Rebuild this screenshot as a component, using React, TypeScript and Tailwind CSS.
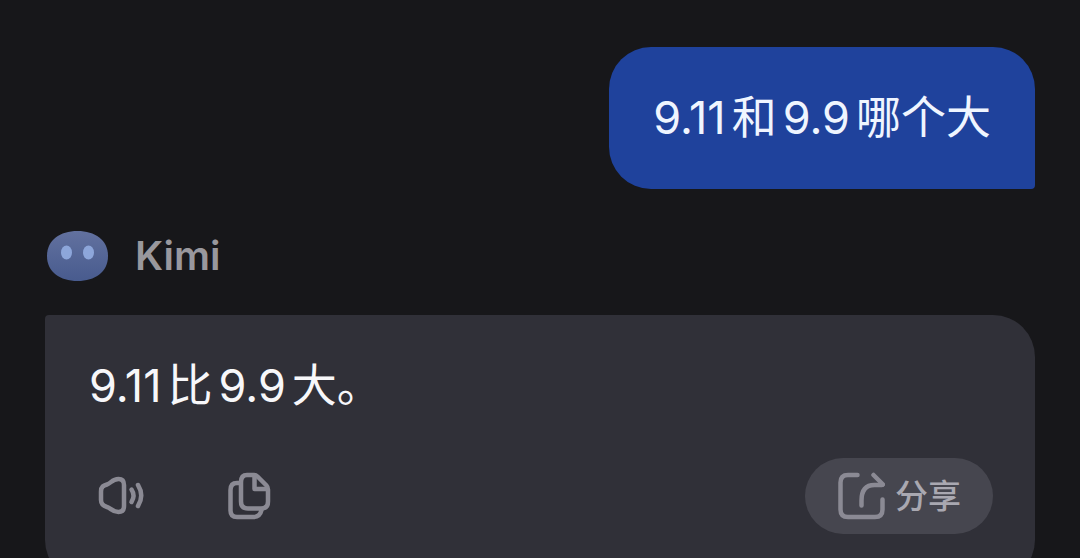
import React from 'react';

interface Message {
  id: number;
  role: 'user' | 'assistant';
  content: string;
}

const messages: Message[] = [
  { id: 1, role: 'user', content: '9.11和9.9哪个大' },
  { id: 2, role: 'assistant', content: '9.11比9.9大。' },
];

// Adds a little air between numbers and the Chinese characters next to them
const SpacedText: React.FC<{ text: string }> = ({ text }) => (
  <>
    {text.split(/([\d.]+)/).filter(Boolean).map((part, i) => (
      <span key={i} className={/^\d/.test(part) ? 'mx-1.5 first:ml-0' : ''}>
        {part}
      </span>
    ))}
  </>
);

const KimiAvatar = () => (
  <svg viewBox="0 0 62 50" className="w-[62px] h-[50px] shrink-0" aria-hidden="true">
    <defs>
      <linearGradient id="kimi-face" x1="0" y1="0" x2="0" y2="1">
        <stop offset="0" stopColor="#62719f" />
        <stop offset="1" stopColor="#485b8e" />
      </linearGradient>
    </defs>
    <path d="M30.500 0C48 0 61 9 61 25S48 50 30.500 50 0 41 0 25 13 0 30.500 0Z" fill="url(#kimi-face)" />
    <ellipse cx="19.500" cy="21.500" rx="5.500" ry="7" fill="#8da6da" />
    <ellipse cx="41.500" cy="21.500" rx="5.500" ry="7" fill="#8da6da" />
  </svg>
);

const SpeakerIcon = () => (
  <svg viewBox="0 0 48 48" className="size-12" fill="none" stroke="currentColor" strokeWidth="4.500" strokeLinecap="round" strokeLinejoin="round" aria-hidden="true">
    <path d="M4 19.500C4 14.500 6.500 13.500 10 12.500C14 11.500 15 7 21.500 7Q27 7 27 13V34Q27 40 21.500 40C15 40 14 36 10 35C6.500 34 4 32.500 4 28Z" />
    <path d="M34.500 17.500Q38.500 23.500 34.500 30" />
    <path d="M41 13Q47.500 23.500 41 34" />
  </svg>
);

const CopyIcon = () => (
  <svg viewBox="0 0 48 48" className="size-12" fill="none" stroke="currentColor" strokeWidth="4.500" strokeLinecap="round" strokeLinejoin="round" aria-hidden="true">
    <path d="M22 3H29Q31 3 32.500 4.500L41.500 13.500Q43 15 43 17.500V29.500Q43 36.500 36 36.500H23Q16 36.500 16 29.500V10Q16 3 22 3Z" />
    <path d="M29.500 4V17H41.500" />
    <path d="M14 11H12Q5.500 11 5.500 18V38.500Q5.500 45 12 45H28Q35 45 36.500 38" />
  </svg>
);

const ShareIcon = () => (
  <svg viewBox="0 0 48 48" className="size-12" fill="none" stroke="currentColor" strokeWidth="4.500" strokeLinecap="round" strokeLinejoin="round" aria-hidden="true">
    <path d="M20.500 3H11Q3.500 3 3.500 10.500V37.500Q3.500 45 11 45H38Q45.500 45 45.500 37.500V27.500" />
    <path d="M24.500 33.500V28.500Q24.500 13 37.500 13H45" />
    <path d="M36.500 3L46 12.500" />
  </svg>
);

const UserMessage: React.FC<{ content: string }> = ({ content }) => (
  <div className="flex justify-end">
    <p className="bg-[#1f429c] text-[#eff5ff] text-[45px] leading-[54px] font-normal px-11 py-11 rounded-[42px] rounded-br-sm">
      <SpacedText text={content} />
    </p>
  </div>
);

const AssistantMessage: React.FC<{ content: string }> = ({ content }) => (
  <div className="mt-[42px]">
    <div className="flex items-center gap-[26px] px-0.5 h-[50px]">
      <KimiAvatar />
      <h2 className="text-[#99989d] text-[40px] leading-[50px] font-semibold">Kimi</h2>
    </div>
    <div className="mt-[34px] bg-[#303038] rounded-[42px] rounded-tl-sm px-11 pt-11 pb-12">
      <p className="text-[#f7f7fa] text-[45px] leading-[54px]">
        <SpacedText text={content} />
      </p>
      <div className="mt-[45px] flex items-center justify-between text-[#8b8a94]">
        <div className="flex items-center gap-20 pl-2">
          <button type="button" aria-label="朗读">
            <SpeakerIcon />
          </button>
          <button type="button" aria-label="复制">
            <CopyIcon />
          </button>
        </div>
        <button type="button" className="flex items-center gap-2.5 bg-[#46464f] rounded-full h-[76px] px-8 -mr-0.5">
          <ShareIcon />
          <span className="text-[#a9a8b1] text-[33px] leading-[48px] font-medium">分享</span>
        </button>
      </div>
    </div>
  </div>
);

export default function App() {
  return (
    <main className="h-screen overflow-hidden bg-[#17171a] px-[45px] pt-[47px] font-[Inter,'Noto_Sans_CJK_SC',sans-serif]">
      {messages.map((m) =>
        m.role === 'user' ? (
          <UserMessage key={m.id} content={m.content} />
        ) : (
          <AssistantMessage key={m.id} content={m.content} />
        )
      )}
    </main>
  );
}
